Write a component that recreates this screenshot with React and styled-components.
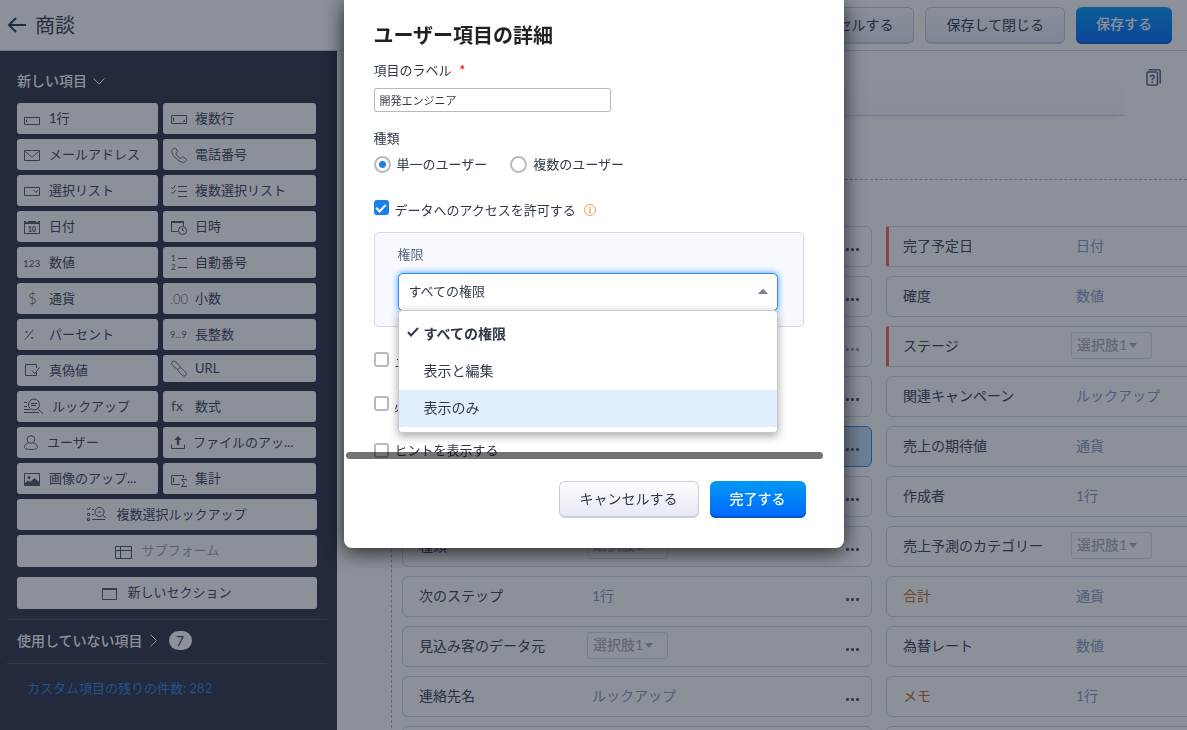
import React, { useState } from "react";
import styled, { createGlobalStyle, css } from "styled-components";

const GlobalStyle = createGlobalStyle`
  * {
    box-sizing: border-box;
  }
  body {
    margin: 0;
    overflow: hidden;
    background: #fff;
    color: #313949;
    font-family: "Lato", "Noto Sans CJK JP", sans-serif;
    font-size: 14px;
  }
  button, input, select {
    margin: 0;
    font-family: inherit;
    color: inherit;
  }
  ul {
    margin: 0;
    padding: 0;
    list-style: none;
  }
  svg {
    overflow: visible;
  }
`;

// ---------- header ----------

const Header = styled.header`
  display: flex;
  align-items: center;
  height: 51px;
  padding: 0 15px 0 8px;
  border-bottom: 1px solid #c5dbe9;
`;

const BackLink = styled.a`
  display: flex;
  margin-right: 9px;
  color: #1b3a4e;
`;

const PageTitle = styled.h1`
  flex: 1;
  margin: 0;
  font-size: 20px;
  line-height: 30px;
  font-weight: 400;
`;

const Actions = styled.div`
  display: flex;
  justify-content: flex-end;
  gap: 11px;
`;

const Button = styled.button`
  height: 37px;
  padding: 0 20px 2px;
  border: 1px solid #c9cddd;
  border-bottom-width: 2px;
  border-radius: 6px;
  background: linear-gradient(#fdfdff, #e6e9f4);
  font-size: 14px;
  white-space: nowrap;
  ${props =>
    props.$primary &&
    css`
      padding-bottom: 4px;
      border: 0;
      background: linear-gradient(#0099f2, #0068ff);
      box-shadow: inset 0 -2px 0 #0457c8;
      color: #fff;
      font-weight: 500;
    `}
`;

const Layout = styled.div`
  display: flex;
  height: calc(100vh - 51px);
`;

// ---------- sidebar ----------

const Sidebar = styled.aside`
  flex: 0 0 337px;
  padding: 20px 10px 0 7px;
  background: #2c3243;
  color: #fff;
`;

const FieldPanel = styled.section`
  padding: 0 10px 10px;
`;

const SideTitle = styled.h2`
  display: flex;
  align-items: center;
  gap: 6px;
  margin: 0;
  font-size: 14px;
  line-height: 20px;
  font-weight: 500;
`;

const Columns = styled.div`
  display: grid;
  grid-template-columns: 141px 153px;
  gap: 5px;
  margin: 12px 0 5px;
`;

const Stack = styled.div`
  display: flex;
  flex-direction: column;
  gap: 5px;
`;

const FieldSlot = styled.div`
  height: 31px;
`;

const FieldButton = styled.button`
  display: flex;
  align-items: center;
  gap: ${props => (props.$inset ? "8px" : "9px")};
  width: 100%;
  height: ${props => (props.$short ? "27px" : "31px")};
  padding: 0 ${props => (props.$inset ? "8px" : "7px")};
  border: 0;
  border-radius: 3px;
  background: #fff;
  color: #3c4255;
  font-size: 13px;
  line-height: 20px;
  white-space: nowrap;
  svg {
    flex: none;
    color: #53565e;
  }
`;

const WideButton = styled(FieldButton)`
  justify-content: center;
  gap: 10px;
  height: ${props => (props.$tall ? "32px" : "31px")};
  &:disabled {
    color: #a3a8b6;
  }
`;

const FieldName = styled.span`
  padding-bottom: 2px;
`;

const NewSection = styled.div`
  margin-top: 5px;
`;

const UnusedRow = styled.section`
  display: flex;
  align-items: center;
  gap: 12px;
  height: 45px;
  padding: 0 10px 2px;
  border-top: 1px solid #485368;
  border-bottom: 1px solid #485368;
`;

const Count = styled.span`
  width: 23px;
  border-radius: 10px;
  background: #fff;
  color: #3c4255;
  font-size: 14px;
  line-height: 19px;
  text-align: center;
`;

const RemainingLink = styled.a`
  display: block;
  padding: 14px 20px;
  color: #2f82d8;
  font-size: 13px;
  line-height: 20px;
  text-decoration: none;
`;

// ---------- layout canvas ----------

const Main = styled.main`
  flex: 1;
  min-width: 0;
  padding: 24px 0 0 54px;
  overflow: hidden;
`;

const Banner = styled.div`
  display: flex;
  gap: 22px;
  padding-right: 26px;
  color: #55607c;
  svg {
    margin-top: -6px;
  }
`;

const BannerBox = styled.div`
  flex: 1;
  height: 41px;
  border-bottom: 1px solid #d9dce5;
  background: linear-gradient(#fff, #f7f7fd);
  box-shadow: 0 6px 6px -6px rgba(40, 50, 80, 0.15);
`;

const FormSection = styled.section`
  display: grid;
  grid-template-columns: 470px 470px;
  gap: 14px;
  margin-top: 63px;
  padding: 46px 0 10px 10px;
  border: 1px dashed #a6aebc;
  border-right: 0;
`;

const CardList = styled.ul`
  display: flex;
  flex-direction: column;
  gap: 9px;
`;

const Card = styled.li`
  display: grid;
  grid-template-columns: 173px 1fr auto;
  align-items: center;
  height: 41px;
  padding: 0 12px 2px 16px;
  border: 1px solid ${props => (props.$active ? "#2f86f5" : "#c8dfea")};
  border-radius: 6px;
  background: ${props => (props.$active ? "#c9dff5" : "transparent")};
  ${props =>
    props.$required &&
    css`
      padding-left: 14px;
      border-left: 3px solid #ff5f5c;
      border-top-left-radius: 2px;
      border-bottom-left-radius: 2px;
    `}
`;

const CardLabel = styled.span`
  line-height: 20px;
  color: ${props => (props.$custom ? "#bf6c20" : "#3a4052")};
`;

const CardType = styled.span`
  line-height: 20px;
  color: #8797c0;
`;

const PickWrap = styled.div`
  display: flex;
  align-items: center;
  width: 81px;
  height: 27px;
  margin-left: -5px;
  border: 1px solid #dfe2ea;
  border-radius: 3px;
  color: #a3afbb;
`;

const PickSelect = styled.select`
  width: 57px;
  padding: 0 0 2px 5px;
  border: 0;
  background: transparent;
  color: #adafb8;
  font-size: 14px;
  font-weight: 500;
  line-height: 20px;
  appearance: none;
  &:disabled {
    opacity: 1;
  }
`;

const MoreButton = styled.button`
  display: flex;
  padding: 7px 0 0;
  border: 0;
  background: none;
  color: ${props => (props.$faded ? "#989faf" : "#4d5873")};
`;

// ---------- dialog ----------

const Overlay = styled.div`
  position: fixed;
  inset: 0;
  display: flex;
  justify-content: center;
  align-items: flex-start;
  background: rgba(24, 34, 51, 0.5);
`;

const Dialog = styled.div`
  width: 500px;
  border-radius: 0 0 8px 8px;
  background: #fff;
  box-shadow: 0 4px 20px rgba(0, 0, 0, 0.75);
`;

const DialogBody = styled.div`
  position: relative;
  padding: 20px 40px 0 30px;
  font-size: 13px;
  line-height: 20px;
`;

const DialogTitle = styled.h2`
  margin: 0 0 10px;
  font-size: 20px;
  line-height: 30px;
  font-weight: 700;
  color: #1f2123;
`;

const Label = styled.label`
  display: block;
`;

const Star = styled.span`
  margin-left: 8px;
  color: #f00;
  font-weight: 700;
`;

const TextInput = styled.input`
  display: block;
  width: 237px;
  height: 24px;
  margin-top: 8px;
  padding: 0 5px;
  border: 1px solid #b3bac1;
  border-radius: 2px;
  font-size: 11px;
`;

const RadioGroup = styled.fieldset`
  margin: 16px 0 0;
  padding: 0;
  border: 0;
  legend {
    padding: 0;
  }
`;

const RadioRow = styled.div`
  display: flex;
  gap: 23px;
  margin-top: 6px;
`;

const Option = styled.label`
  display: flex;
  align-items: ${props => (props.$top ? "flex-start" : "center")};
  gap: 6px;
`;

const Radio = styled.input`
  width: 17px;
  height: 17px;
  border: 2px solid #b3bac1;
  border-radius: 50%;
  appearance: none;
  &:checked {
    background: radial-gradient(circle, #1980eb 3px, #fff 4px);
  }
`;

const Tick = styled.input`
  display: grid;
  place-items: center;
  width: 15px;
  height: 15px;
  border: 2px solid #b3bac1;
  border-radius: 3px;
  appearance: none;
  &:checked {
    border-color: #1980eb;
    background: #1980eb;
  }
  &:checked::before {
    content: "";
    width: 8px;
    height: 4px;
    border-left: 2px solid #fff;
    border-bottom: 2px solid #fff;
    transform: translateY(-1px) rotate(-45deg);
  }
`;

const AccessRow = styled.div`
  display: flex;
  align-items: center;
  gap: 8px;
  margin-top: 26px;
`;

const PermissionBox = styled.div`
  margin: 12px 0 25px;
  padding: 11px 25px 15px 23px;
  border: 1px solid #cddcea;
  border-radius: 5px;
  background: #f7f9ff;
`;

const PermissionLabel = styled.label`
  display: block;
  margin-bottom: 9px;
  color: #5a657d;
`;

const Combo = styled.div`
  position: relative;
  > svg {
    position: absolute;
    top: 16px;
    right: 10px;
    color: #7c848f;
  }
`;

const ComboSelect = styled.select`
  display: block;
  width: 100%;
  height: 38px;
  padding: 0 10px 2px;
  border: 1px solid #2f8df5;
  border-radius: 5px;
  background: #fff;
  box-shadow: 0 0 6px #3d96f7;
  font-size: 13px;
  appearance: none;
`;

const Menu = styled.ul`
  position: absolute;
  top: 37px;
  left: 0;
  right: 0;
  z-index: 1;
  padding: 5px 0;
  border: 1px solid #c4c8cd;
  border-radius: 4px;
  background: #fff;
  box-shadow: 0 3px 10px rgba(0, 0, 0, 0.35);
`;

const MenuItem = styled.li`
  display: grid;
  grid-template-columns: 12px 1fr;
  gap: 5px;
  align-items: center;
  height: 37px;
  padding: 0 8px 2px;
  font-size: 14px;
  font-weight: ${props => (props.$selected ? 700 : 400)};
  background: ${props => (props.$hovered ? "#e1effc" : "transparent")};
  svg {
    margin-top: -3px;
  }
`;

const OptionStack = styled.div`
  display: flex;
  flex-direction: column;
  gap: 24px;
`;

const ScrollThumb = styled.div`
  position: absolute;
  left: 2px;
  bottom: 1px;
  width: 477px;
  height: 7px;
  border-radius: 4px;
  background: rgba(0, 0, 0, 0.55);
`;

const DialogFooter = styled.div`
  display: flex;
  justify-content: flex-end;
  gap: 11px;
  padding: 21px 38px 30px;
`;

// ---------- icons ----------

const Svg = ({ w = 16, h = 17, children }) => (
  <svg
    width={w}
    height={h}
    viewBox={`0 0 ${w} ${h}`}
    fill="none"
    stroke="currentColor"
    strokeWidth="1"
    aria-hidden="true"
  >
    {children}
  </svg>
);

const Glyph = ({ x = 0, y = 13, size = 12, weight = 400, children }) => (
  <text x={x} y={y} fontSize={size} fontWeight={weight} fill="currentColor" stroke="none">
    {children}
  </text>
);

const icons = {
  line: (
    <Svg>
      <path d="M.5 7.5h15v7H.5zM2.5 9.5v3" />
    </Svg>
  ),
  area: (
    <Svg>
      <path d="M.5 5.5h15v8H.5zM2.5 7.5v4" />
      <path d="M14 9.500v2.500h-2.500z" fill="currentColor" stroke="none" />
    </Svg>
  ),
  mail: (
    <Svg>
      <path d="M.5 4.500h15v10H.5zM1.500 5.500L8 11.500l6.500-6" />
    </Svg>
  ),
  phone: (
    <Svg>
      <path
        d="M1.200 3.800L3 2.200c.6-.5 1.200-.4 1.600.2l1.700 2.500c.4.6.3 1.100-.2 1.500l-.9.8c-.4.4-.3.8 0 1.300 1 1.500 2.200 2.700 3.700 3.700.5.300.9.400 1.300 0l.9-.9c.4-.4.9-.5 1.500-.1l2.300 1.600c.6.500.7 1 .2 1.600l-1.500 1.500c-.6.600-1.500.7-2.500.4C6.500 14.700 2.200 10.500.9 6.300c-.3-1-.3-1.800.3-2.500z"
        strokeWidth=".9"
      />
    </Svg>
  ),
  select: (
    <Svg>
      <path d="M.5 5.500h15v8H.5zM9.500 8l2.300 2.500L14 8" />
    </Svg>
  ),
  multi: (
    <Svg>
      <path d="M7 4.500h9M7 9.500h9M7 14.500h9" />
      <path d="M.3 5l1.500 1.800L4.700 3M.3 10l1.500 1.800L4.700 8" strokeWidth=".9" />
    </Svg>
  ),
  date: (
    <Svg>
      <path d="M.5 4.500h15v11H.5z" />
      <path d="M0 3h2v1h2V3h8v1h2V3h2v3H0z" fill="currentColor" stroke="none" />
      <Glyph x={4} y={14} size={7} weight={900}>
        10
      </Glyph>
    </Svg>
  ),
  datetime: (
    <Svg>
      <path d="M7 13.500H.5v-9h12V8" />
      <path d="M0 4h13" strokeWidth="2" />
      <circle cx="11.500" cy="12.500" r="4" />
      <path d="M11.500 10v2.500H13" />
    </Svg>
  ),
  number: (
    <Svg>
      <Glyph x={-1} size={10}>
        123
      </Glyph>
    </Svg>
  ),
  auto: (
    <Svg>
      <Glyph y={7} size={8}>
        1
      </Glyph>
      <Glyph y={16} size={8}>
        2
      </Glyph>
      <path d="M7 4.500h9M7 13.500h9" />
    </Svg>
  ),
  currency: (
    <Svg>
      <Glyph x={4} y={14} size={15} weight={300}>
        $
      </Glyph>
    </Svg>
  ),
  decimal: (
    <Svg>
      <Glyph x={-1} y={14} size={13} weight={300}>
        .00
      </Glyph>
    </Svg>
  ),
  percent: (
    <Svg>
      <path d="M1 13.500l8-9.500" />
      <circle cx="2.500" cy="6" r="1" fill="currentColor" stroke="none" />
      <circle cx="8" cy="12" r="1" fill="currentColor" stroke="none" />
    </Svg>
  ),
  long: (
    <Svg>
      <Glyph x={-1} y={12} size={9}>
        9...9
      </Glyph>
    </Svg>
  ),
  bool: (
    <Svg>
      <path d="M12.500 6V2.500h-11v11h11v-3M8 8.500l2.700 3L15.500 5.500" />
    </Svg>
  ),
  url: (
    <Svg>
      <path
        d="M6.500 9.200c-.7-.2-1.300-.6-1.900-1.200L1.400 5C.3 3.900.3 2.600 1.200 1.700s2.300-.9 3.300.1l3.800 3.800c1 1 1.100 2.200.3 3.200M9.500 7.800c.7.200 1.300.6 1.900 1.200l3.200 3.200c1 1.100 1 2.300.1 3.200s-2.300.900-3.300-.1l-3.700-3.700c-1-1-1.200-2.300-.4-3.200"
        strokeWidth=".9"
      />
    </Svg>
  ),
  lookup: (
    <Svg w={19}>
      <circle cx="10" cy="6.500" r="5.500" />
      <path d="M7 5.500h6M7 7.500h5M14 11l5 4.500M0 4.500h3M0 8.500h3M0 11.500h6M0 14.500h15" />
    </Svg>
  ),
  formula: (
    <Svg>
      <Glyph size={14}>fx</Glyph>
    </Svg>
  ),
  user: (
    <Svg w={14}>
      <circle cx="7" cy="5.500" r="3.800" />
      <path d="M4.500 8.800C2.200 9.600.5 11 .5 13.300c0 1.400 2.800 2.200 6.500 2.200s6.500-.8 6.500-2.200c0-2.300-1.700-3.700-4-4.500" />
    </Svg>
  ),
  upload: (
    <Svg w={14}>
      <path d="M.5 10.500v4h13v-4" />
      <path d="M7 2l3.500 4H8.200v5H5.800V6H3.500z" fill="currentColor" stroke="none" />
    </Svg>
  ),
  image: (
    <Svg>
      <path d="M.5 3.500h15v12H.5z" />
      <circle cx="5" cy="7.500" r="1.500" fill="currentColor" stroke="none" />
      <path d="M1 15.500V13l3-2.500 2 1.500L10.500 8 15 12v3.500z" fill="currentColor" stroke="none" />
    </Svg>
  ),
  rollup: (
    <Svg>
      <path d="M9 14.500H.5v-9h12V8M2.500 7.500v5M15.500 10.500v-1h-5l3 3.500-3 3.500h5v-1" />
    </Svg>
  ),
  multiLookup: (
    <Svg w={19}>
      <circle cx="12.500" cy="6" r="4.500" />
      <path d="M10.500 6h4M16 9.500l3 2.500M0 2.500L1.200 4 3.500 1.500M5 3.500h2M5 8.500h2M.5 7.500h2v2h-2zM.5 12.500h2v2h-2zM5 13.500h13" />
    </Svg>
  ),
  subform: (
    <Svg w={17} h={18}>
      <path d="M.5 4.500h16v12H.5zM.5 8.500h16M5.500 4.500v12" />
    </Svg>
  ),
  section: (
    <Svg w={15}>
      <path d="M.5 3.500h14v11H.5z" />
      <path d="M0 4h15" strokeWidth="2" />
    </Svg>
  )
};

const Dots = () => (
  <svg width="13" height="3" viewBox="0 0 13 3" fill="currentColor" aria-hidden="true">
    <rect width="3" height="3" rx="1" />
    <rect x="5" width="3" height="3" rx="1" />
    <rect x="10" width="3" height="3" rx="1" />
  </svg>
);

// ---------- data ----------

const leftFields = [
  ["line", "1行"],
  ["mail", "メールアドレス"],
  ["select", "選択リスト"],
  ["date", "日付"],
  ["number", "数値"],
  ["currency", "通貨"],
  ["percent", "パーセント"],
  ["bool", "真偽値"],
  ["lookup", "ルックアップ"],
  ["user", "ユーザー"],
  ["image", "画像のアップ..."]
];

const rightFields = [
  ["area", "複数行"],
  ["phone", "電話番号"],
  ["multi", "複数選択リスト"],
  ["datetime", "日時"],
  ["auto", "自動番号"],
  ["decimal", "小数"],
  ["long", "長整数"],
  ["url", "URL"],
  ["formula", "数式"],
  ["upload", "ファイルのアッ..."],
  ["rollup", "集計"]
];

const leftCards = [
  {},
  {},
  { faded: true },
  {},
  { active: true },
  {},
  { label: "種類", pick: true },
  { label: "次のステップ", type: "1行" },
  { label: "見込み客のデータ元", pick: true },
  { label: "連絡先名", type: "ルックアップ" },
  {}
];

const rightCards = [
  { label: "完了予定日", type: "日付", required: true },
  { label: "確度", type: "数値" },
  { label: "ステージ", pick: true, required: true },
  { label: "関連キャンペーン", type: "ルックアップ" },
  { label: "売上の期待値", type: "通貨" },
  { label: "作成者", type: "1行" },
  { label: "売上予測のカテゴリー", pick: true },
  { label: "合計", type: "通貨", custom: true },
  { label: "為替レート", type: "数値" },
  { label: "メモ", type: "1行", custom: true },
  {}
];

const permissions = ["すべての権限", "表示と編集", "表示のみ"];

// ---------- parts ----------

const FieldStack = ({ fields, inset }) => (
  <Stack>
    {fields.map(([icon, name]) => (
      <FieldSlot key={icon}>
        <FieldButton type="button" $inset={inset} $short={icon === "url"}>
          {icons[icon]}
          <FieldName>{name}</FieldName>
        </FieldButton>
      </FieldSlot>
    ))}
  </Stack>
);

const PickList = ({ label }) => (
  <PickWrap>
    <PickSelect aria-label={label} disabled>
      <option>選択肢1</option>
    </PickSelect>
    <svg width="8" height="5" viewBox="0 0 8 5" fill="currentColor" aria-hidden="true">
      <path d="M0 0h8L4 5z" />
    </svg>
  </PickWrap>
);

const Cards = ({ items }) => (
  <CardList>
    {items.map((item, i) => (
      <Card key={i} $required={item.required} $active={item.active}>
        <CardLabel $custom={item.custom}>{item.label}</CardLabel>
        {item.pick ? <PickList label={item.label} /> : <CardType>{item.type}</CardType>}
        <MoreButton type="button" aria-label="その他" $faded={item.faded}>
          <Dots />
        </MoreButton>
      </Card>
    ))}
  </CardList>
);

const UserFieldDialog = () => {
  const [name, setName] = useState("開発エンジニア");
  const [permission, setPermission] = useState(permissions[0]);
  return (
    <Dialog role="dialog" aria-labelledby="dialog-title">
      <DialogBody>
        <DialogTitle id="dialog-title">ユーザー項目の詳細</DialogTitle>
        <Label htmlFor="field-label">
          項目のラベル<Star>*</Star>
        </Label>
        <TextInput id="field-label" value={name} onChange={e => setName(e.target.value)} />
        <RadioGroup>
          <legend>種類</legend>
          <RadioRow>
            <Option>
              <Radio type="radio" name="kind" defaultChecked />
              単一のユーザー
            </Option>
            <Option>
              <Radio type="radio" name="kind" />
              複数のユーザー
            </Option>
          </RadioRow>
        </RadioGroup>
        <AccessRow>
          <Option $top>
            <Tick type="checkbox" defaultChecked />
            データへのアクセスを許可する
          </Option>
          <svg width="12" height="12" viewBox="0 0 12 12" fill="none" stroke="#f5a04c" aria-hidden="true">
            <circle cx="6" cy="6" r="5.500" />
            <path d="M6 5v4M6 2.800v1.400M5 5.300h1M5 8.700h2" strokeWidth="1.200" />
          </svg>
        </AccessRow>
        <PermissionBox>
          <PermissionLabel htmlFor="permission">権限</PermissionLabel>
          <Combo>
            <ComboSelect
              id="permission"
              value={permission}
              onChange={e => setPermission(e.target.value)}
            >
              {permissions.map(p => (
                <option key={p}>{p}</option>
              ))}
            </ComboSelect>
            <svg width="10" height="5" viewBox="0 0 10 5" fill="currentColor" aria-hidden="true">
              <path d="M0 5l4-4.500q1-1 2 0L10 5z" />
            </svg>
            <Menu role="listbox">
              {permissions.map((p, i) => (
                <MenuItem
                  key={p}
                  role="option"
                  aria-selected={p === permission}
                  $selected={p === permission}
                  $hovered={i === 2}
                  onClick={() => setPermission(p)}
                >
                  {p === permission ? (
                    <svg width="12" height="10" viewBox="0 0 12 10" fill="none" stroke="currentColor" strokeWidth="2" aria-hidden="true">
                      <path d="M1 5l3 3.500L11 1" />
                    </svg>
                  ) : (
                    <span />
                  )}
                  {p}
                </MenuItem>
              ))}
            </Menu>
          </Combo>
        </PermissionBox>
        <OptionStack>
          <Option $top>
            <Tick type="checkbox" />
            ユニ
          </Option>
          <Option $top>
            <Tick type="checkbox" />
            必須
          </Option>
          <Option>
            <Tick type="checkbox" />
            ヒントを表示する
          </Option>
        </OptionStack>
        <ScrollThumb />
      </DialogBody>
      <DialogFooter>
        <Button type="button">キャンセルする</Button>
        <Button type="button" $primary>
          完了する
        </Button>
      </DialogFooter>
    </Dialog>
  );
};

export default () => (
  <>
    <GlobalStyle />
    <Header>
      <BackLink href="#" aria-label="戻る">
        <svg width="18" height="16" viewBox="0 0 18 16" fill="none" stroke="currentColor" strokeWidth="2" aria-hidden="true">
          <path d="M18 8H1.500M8 1L1 8l7 7" />
        </svg>
      </BackLink>
      <PageTitle>商談</PageTitle>
      <Actions>
        <Button type="button">キャンセルする</Button>
        <Button type="button">保存して閉じる</Button>
        <Button type="button" $primary>
          保存する
        </Button>
      </Actions>
    </Header>
    <Layout>
      <Sidebar>
        <FieldPanel>
          <SideTitle>
            新しい項目
            <Svg w={12} h={7}>
              <path d="M.5.500L6 6l5.500-5.500" />
            </Svg>
          </SideTitle>
          <Columns>
            <FieldStack fields={leftFields} />
            <FieldStack fields={rightFields} inset />
          </Columns>
          <Stack>
            <WideButton type="button">
              {icons.multiLookup}
              <FieldName>複数選択ルックアップ</FieldName>
            </WideButton>
            <WideButton type="button" $tall disabled>
              {icons.subform}
              <FieldName>サブフォーム</FieldName>
            </WideButton>
            <NewSection>
              <WideButton type="button" $tall>
                {icons.section}
                <FieldName>新しいセクション</FieldName>
              </WideButton>
            </NewSection>
          </Stack>
        </FieldPanel>
        <UnusedRow>
          <SideTitle>
            使用していない項目
            <Svg w={8} h={13}>
              <path d="M1.500.500l6 6-6 6" />
            </Svg>
          </SideTitle>
          <Count>7</Count>
        </UnusedRow>
        <RemainingLink href="#">カスタム項目の残りの件数: 282</RemainingLink>
      </Sidebar>
      <Main>
        <Banner>
          <BannerBox />
          <svg width="15" height="17" viewBox="0 0 15 17" fill="none" stroke="currentColor" strokeWidth="1.500" aria-hidden="true">
            <rect x="1" y="3" width="10.500" height="13" rx="1" />
            <path d="M3 1.500Q3.300.800 4 .800h9q1.200 0 1.200 1.200v12.500" />
            <path d="M4.300 8q0-1.800 2-1.800t2 1.700q0 1-2 2v1.300M6.300 12.200v1.500" />
          </svg>
        </Banner>
        <FormSection>
          <Cards items={leftCards} />
          <Cards items={rightCards} />
        </FormSection>
      </Main>
    </Layout>
    <Overlay>
      <UserFieldDialog />
    </Overlay>
  </>
);
